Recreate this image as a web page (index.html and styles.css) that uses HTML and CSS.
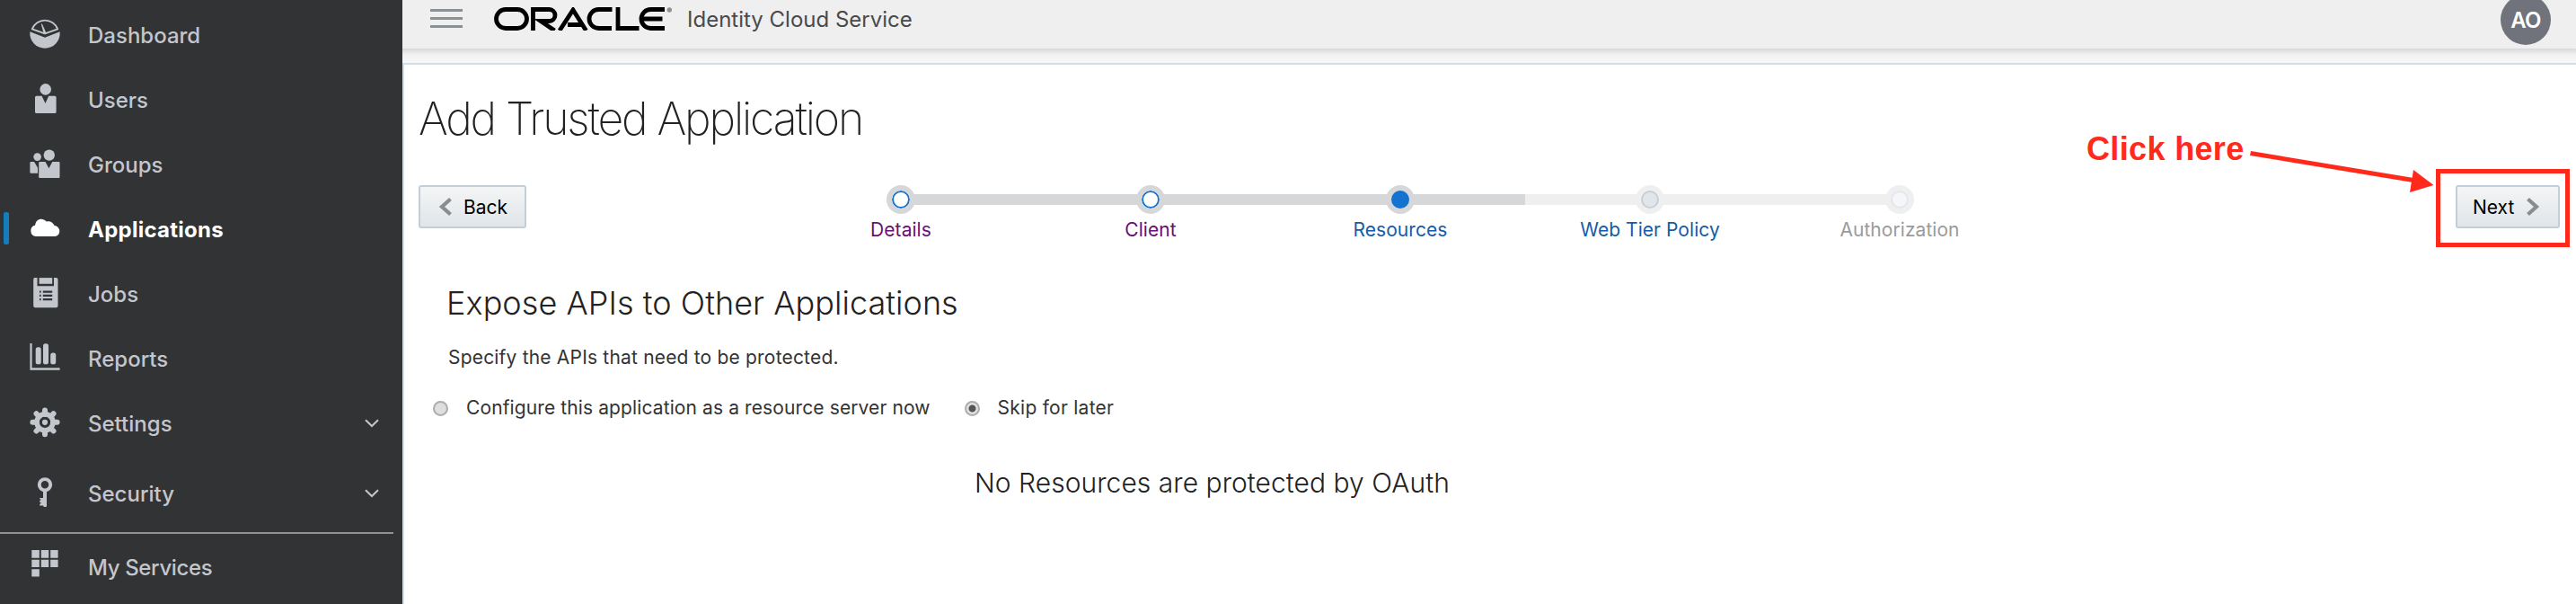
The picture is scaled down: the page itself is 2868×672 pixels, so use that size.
FILE: index.html
```html
<!DOCTYPE html>
<html lang="en">
<head>
<meta charset="utf-8">
<title>Identity Cloud Service</title>
<link rel="stylesheet" href="styles.css">
</head>
<body>
<div class="app">
  <nav class="sidebar">
    <a class="item"><svg class="icon" viewBox="0 0 34 34"><path d="M2.800 11.400A15.200 15.200 0 0 1 31.200 11.400L17 16.300Z" fill="none" stroke="currentColor" stroke-width="1.900" stroke-linejoin="round"/><path d="M12.800 5.800L13.900 5.600 18.600 16H15.600Z"/><path d="M.4 14.300L17 20.700 33.600 14.300A16.700 16.700 0 1 1 .4 14.300Z"/></svg><span class="t">Dashboard</span></a>
    <a class="item"><svg class="icon" viewBox="0 0 34 34"><circle cx="17.700" cy="6.400" r="6.300"/><path d="M7.500 13.700H13.500L17.500 22 21.200 13.700H28q1.600 0 1.600 1.600V31.400q0 1.600-1.600 1.600H7.500Q6 33 6 31.400V15.300q0-1.600 1.500-1.600Z"/></svg><span class="t">Users</span></a>
    <a class="item"><svg class="icon" viewBox="0 0 34 34"><circle cx="8.600" cy="9.600" r="4.300"/><circle cx="21.800" cy="7.600" r="6.200"/><path d="M1.500 15H5L9 21.500V27.700H1.500Q.4 27.700.4 26.500V16Q.4 15 1.500 15Z"/><path d="M11.500 15H17.500L21.400 22.300 25.300 15H32.500q1 0 1 1V32q0 1-1 1H11.200q-1 0-1-1V16.200q0-1.200 1.300-1.200Z"/></svg><span class="t">Groups</span></a>
    <a class="item active"><svg class="icon" viewBox="0 0 34 34"><path d="M7 26A6.300 6.300 0 0 1 6.200 13.600C6.700 6.800 14 4.500 18.700 9.600C23 8.600 26 10.800 27.400 13.700C35.600 15 34.800 26 27.500 26Z"/></svg><span class="t applications">Applications</span></a>
    <a class="item"><svg class="icon" viewBox="0 0 34 34"><path fill-rule="evenodd" d="M5.600.1H8.500V9.200H27V.1H29.500Q31.500.1 31.500 2.200V31.200Q31.500 33.200 29.500 33.200H6.200Q4.200 33.200 4.200 31.200V2.200Q4.200.1 5.600.1ZM11 14.400V16.700H12.600V14.400ZM14.800 14.400V16.700H25.200V14.400ZM11 18.700V21H12.600V18.700ZM14.800 18.700V21H25.200V18.700ZM11 23V25.300H12.600V23ZM14.800 23V25.300H25.200V23Z"/><path d="M10.600.1H25.200V6.800H10.600Z"/></svg><span class="t">Jobs</span></a>
    <a class="item"><svg class="icon" viewBox="0 0 34 34"><path d="M.4 1H2.600V28.300H33.600V30.700H.4Z"/><rect x="6.700" y="5.300" width="6" height="19" rx="2.600"/><rect x="15" y="1.300" width="6" height="23" rx="2.600"/><rect x="23.200" y="11.600" width="6" height="12.700" rx="2.600"/></svg><span class="t">Reports</span></a>
    <a class="item"><svg class="icon" viewBox="0 0 34 34"><g stroke="currentColor" stroke-width="6" stroke-linecap="round"><path d="M17 3.400V8M17 26V30.200M3.400 16.800H8M26 16.800H30.600M7.500 7.300L10 10M24 24L26.500 26.500M7.500 26.500L10 24M24 10L26.500 7.300"/></g><circle cx="17" cy="16.800" r="9" fill="none" stroke="currentColor" stroke-width="5.600"/><circle cx="17" cy="16.800" r="3.100"/></svg><span class="t">Settings</span><svg class="chev" viewBox="0 0 16 10"><path d="M1 1.200L8 8 15 1.200"/></svg></a>
    <a class="item security-row"><svg class="icon" viewBox="0 0 34 34"><circle cx="17" cy="8.300" r="6.200" fill="none" stroke="currentColor" stroke-width="3.900"/><path d="M15 16H19V32.100Q19 33 18 33H16L14.800 31.600H11.200V29.900L12.800 28.800 11.200 27.600V26.100L12.800 25.100 11.200 24V23H15Z"/></svg><span class="t">Security</span><svg class="chev" viewBox="0 0 16 10"><path d="M1 1.200L8 8 15 1.200"/></svg></a>
    <hr class="rule">
    <a class="item services-row"><svg class="icon" viewBox="0 0 34 34"><path d="M2.300 2H10.800V10.700H2.300ZM12.800 2H21.200V10.700H12.800ZM23.200 2H31.600V10.700H23.200ZM2.300 12.700H10.800V21H2.300ZM12.800 12.700H21.200V21H12.800ZM23.200 12.700H31.600V21H23.200ZM2.300 23.200H10.800V31.600H2.300Z"/></svg><span class="t services">My Services</span></a>
  </nav>
  <div class="main">
    <header class="topbar">
      <svg class="burger" viewBox="0 0 36 21"><path d="M0 0H36V3H0ZM0 9H36V12H0ZM0 18H36V21H0Z"/></svg>
      <svg class="logo" viewBox="0 0 200 26" aria-label="Oracle"><g fill="none" stroke="#000" stroke-width="4.800"><path d="M13 2.500H26A10.500 10.500 0 0 1 26 23.500H13A10.500 10.500 0 0 1 13 2.500Z"/><path d="M43.500 26V2.500H61.500A6.500 6.500 0 0 1 61.500 15.500H52L67.500 26"/><path d="M73 26L88 3 102.500 26M82 19.500H97"/><path d="M131.500 2.500H116.500A10.500 10.500 0 0 0 116.500 23.500H131"/><path d="M138 0V23.500H161.500"/><path d="M190 2.500H174.500A10.500 10.500 0 0 0 174.500 23.500H190M164 13H187.500"/></g><circle cx="195.300" cy="3" r="2.700" fill="#909090"/></svg>
      <span class="t product">Identity Cloud Service</span>
      <span class="avatar"><span class="t">AO</span></span>
    </header>
    <div class="strip"></div>
    <section class="page">
      <h1 class="title t">Add Trusted Application</h1>
      <div class="train-row">
        <button class="btn back"><svg class="arrow" viewBox="0 0 14 20"><path d="M12.500 1.500L3 10 12.500 18.500"/></svg><span class="t">Back</span></button>
        <ol class="train">
          <li class="step visited first"><i class="dot"></i><span class="t">Details</span></li>
          <li class="step visited"><i class="dot"></i><span class="t">Client</span></li>
          <li class="step current"><i class="dot"></i><span class="t">Resources</span></li>
          <li class="step upcoming"><i class="dot"></i><span class="t">Web Tier Policy</span></li>
          <li class="step last"><i class="dot"></i><span class="t">Authorization</span></li>
        </ol>
        <button class="btn next"><span class="t">Next</span><svg class="arrow" viewBox="0 0 14 20"><path d="M1.500 1.500L11 10 1.500 18.500"/></svg></button>
      </div>
      <h2 class="subtitle t">Expose APIs to Other Applications</h2>
      <p class="help t">Specify the APIs that need to be protected.</p>
      <div class="radios">
        <label class="radio"><i class="knob"></i><span class="t">Configure this application as a resource server now</span></label>
        <label class="radio"><i class="knob on"></i><span class="t skip">Skip for later</span></label>
      </div>
      <p class="empty t">No Resources are protected by OAuth</p>
    </section>
  </div>
  <div class="callout">
    <span class="t click">Click here</span>
    <svg class="pointer" viewBox="0 0 210 50"><path d="M5.500 10.500L190 41" fill="none" stroke="#ff2a1b" stroke-width="5"/><path d="M187 29L209.500 46 183 54Z" fill="#ff2a1b"/></svg>
    <span class="frame"></span>
  </div>
</div>
</body>
</html>
```
FILE: styles.css
```css
* { box-sizing: border-box; }
body { margin: 0; font-family: Inter, "Liberation Sans", sans-serif; background: #fff; }
.app { position: relative; display: flex; width: 2868px; height: 672px; overflow: hidden; }
.t { white-space: nowrap; }

.sidebar { width: 448px; height: 672px; background: #323335; flex: none; padding-top: 3px; }
.item { display: flex; align-items: center; height: 72px; padding: 0 26px 0 33px; color: #c3c6cc; font-size: 24px; font-weight: 500; position: relative; }
.icon { width: 34px; height: 34px; fill: currentColor; margin: 0 31px 2px 0; overflow: visible; }
.item .t { flex: 1; }
.item.active { color: #fff; font-weight: 700; }
.item.active::before { content: ""; position: absolute; left: 4px; top: 17px; width: 6px; height: 36px; border-radius: 2px; background: #147dbd; }
.item .applications { letter-spacing: 0.25px; }
.item .services { letter-spacing: -0.35px; }
.chev { width: 16px; height: 10px; fill: none; stroke: #c3c6cc; stroke-width: 2; }
.security-row { margin-top: 6px; }
.rule { width: 438px; height: 2px; margin: 7px 0 0; border: 0; background: #919293; }
.services-row { height: 75px; }
.services-row .icon { margin-bottom: 9px; }

.main { flex: 1; display: flex; flex-direction: column; }
.topbar { height: 54px; background: #efefef; display: flex; align-items: flex-start; padding: 0 28px 0 31px; flex: none; }
.burger { width: 36px; height: 21px; margin: 10px 35px 0 0; fill: #8a9194; }
.logo { width: 200px; height: 26px; margin: 8px 15px 0 0; }
.product { font-size: 24px; line-height: 30px; margin-top: 7px; color: #4a4a4a; }
.avatar { width: 56px; height: 56px; margin: -6px 0 0 auto; border-radius: 50%; background: #70737b; color: #fff; display: flex; align-items: center; justify-content: center; font-size: 24px; font-weight: 600; letter-spacing: -0.8px; }
.strip { height: 16px; flex: none; background: linear-gradient(#d9d9d9, #f1f1f1 7px, #f8f8f8); }
.page { flex: 1; border-top: 2px solid #d3dfe8; border-left: 2px solid #d3dfe8; padding-left: 16px; background: #fff; }
.title { margin: 0; height: 134px; padding-top: 30px; font-size: 50px; line-height: 60px; font-weight: 200; letter-spacing: -2.15px; color: #222; }
.train-row { display: flex; height: 64px; padding-right: 18px; }
.btn { display: flex; align-items: center; flex: none; height: 48px; font-family: inherit; font-size: 21px; color: #000; border: 2px solid #c4ced7; border-radius: 3px; background: linear-gradient(#f3f5f6, #e1e5e8); }
.arrow { width: 14px; height: 20px; flex: none; fill: none; stroke: #8a8c8e; stroke-width: 4.2; overflow: visible; }
.back { width: 120px; padding: 0 0 0 21px; }
.back .arrow { margin-right: 13px; }
.next { width: 116px; margin-left: auto; padding: 0 0 0 17px; }
.next .arrow { margin-left: 14px; }
.train { display: flex; margin: 0 0 0 278px; padding: 0; list-style: none; }
.step { --a: #d6d7d9; --b: #d6d7d9; --ring: #d6d7d9; width: 278px; display: flex; flex-direction: column; align-items: center; font-size: 21px; line-height: 26px; letter-spacing: 0.05px; background: linear-gradient(var(--a), var(--a)) 0 10px / 139px 12px no-repeat, linear-gradient(var(--b), var(--b)) 139px 10px / 139px 12px no-repeat; }
.first { --a: transparent; }
.upcoming { --a: #efefef; --b: #efefef; --ring: #efefef; color: #145ca8; }
.last { --a: #efefef; --b: transparent; --ring: #efefef; color: #9b9b9b; }
.visited { color: #6a0f74; }
.current { color: #145ca8; }
.dot { width: 32px; height: 32px; border-radius: 50%; border: 6px solid var(--ring); margin-bottom: 5px; background: #fff; box-shadow: inset 0 0 0 2px #1473cf; flex: none; }
.current .dot { background: #1473cf; }
.upcoming .dot { background: #e2e6e9; box-shadow: inset 0 0 0 2px #c4ced7; }
.last .dot { background: #f4f6f9; box-shadow: inset 0 0 0 2px #e2e6eb; }
.subtitle { margin: 45px 0 0 31px; font-size: 36px; line-height: 44px; font-weight: 300; letter-spacing: 0.05px; color: #222; }
.help { margin: 25px 0 0 33px; font-size: 21px; line-height: 28px; letter-spacing: 0.19px; color: #333; }
.radios { display: flex; gap: 38px; margin: 28px 0 0 16px; font-size: 21px; line-height: 28px; letter-spacing: 0.11px; color: #333; }
.radio { display: flex; align-items: center; }
.skip { letter-spacing: 0.25px; }
.knob { width: 17px; height: 17px; margin-right: 20px; border-radius: 50%; border: 2px solid #adadad; background: #dedede; }
.knob.on { background: radial-gradient(#555 0 3.5px, #e2e2e2 4.5px); }
.empty { margin: 51px 0 0 619px; font-size: 30px; line-height: 36px; font-weight: 300; letter-spacing: 0.04px; color: #222; }

.callout { position: absolute; left: 2322px; top: 140px; width: 540px; height: 136px; color: #ff2a1b; }
.click { position: absolute; left: 1px; top: 6px; font: bold 36px/40px "Liberation Sans", sans-serif; letter-spacing: 0.35px; }
.pointer { position: absolute; left: 178px; top: 20px; width: 210px; height: 50px; overflow: visible; }
.frame { position: absolute; left: 390px; top: 48px; width: 149px; height: 87px; border: 5px solid #ff2a1b; }
```
